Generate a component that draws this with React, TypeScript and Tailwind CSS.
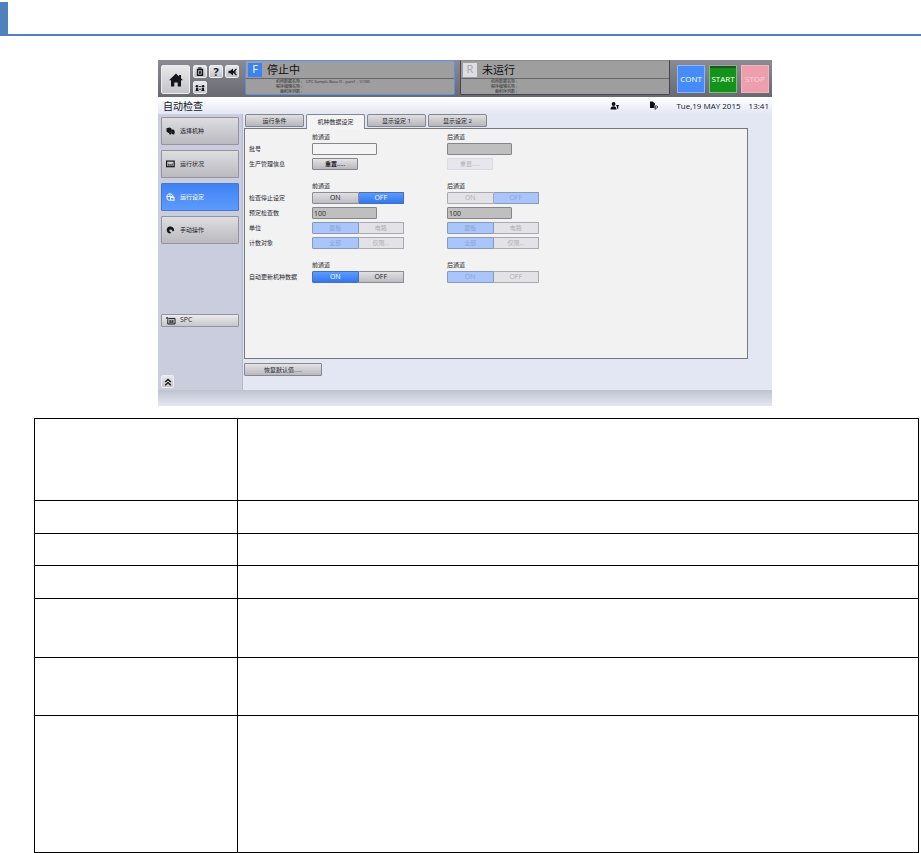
import { useState } from "react";
import type { ReactNode } from "react";
import clsx from "clsx";

const FONT = "font-['Open_Sans','Noto_Sans_CJK_SC',sans-serif]";

const HomeIcon = () => (
  <svg viewBox="0 0 14 14" className="w-[14px] h-[14px]" fill="#15151c">
    <path d="M7 0.5 10 3.4V2H12V5.3L14 7.2H12V13.5H8.7V9.5H5.3V13.5H2V7.2H0L7 0.5Z" />
  </svg>
);

const LockIcon = () => (
  <svg viewBox="0 0 8 9" className="w-[8px] h-[9px]" fill="none" stroke="#15151c">
    <path d="M1.5 8.3V2.5H6.5V8.3Z" strokeWidth="1.4" />
    <path d="M2 1H5.5" strokeWidth="1.2" />
    <path d="M3.4 7V4.2H4.8V7M3.4 5.8H4.8" strokeWidth="0.9" />
  </svg>
);

const MuteIcon = () => (
  <svg viewBox="0 0 9 8" className="w-[9px] h-[8px]">
    <path d="M0.5 2.7H2.2L5 0.5V7.5L2.2 5.3H0.5Z" fill="#15151c" />
    <path d="M5 4 8.5 1M5 4 8.5 7M5 4H8.2" stroke="#15151c" strokeWidth="1.1" />
  </svg>
);

const UsersIcon = () => (
  <svg viewBox="0 0 10 8" className="w-[10px] h-[8px]" fill="#15151c">
    <circle cx="2" cy="2.2" r="1.3" />
    <circle cx="8" cy="2.2" r="1.3" />
    <path d="M0.4 7V6.2H1V4H3.2V6.2H3.8V7ZM6.2 7V6.2H6.8V4H9V6.2H9.6V7Z" />
    <path d="M4.2 2H5.8V2.9H4.2ZM4.2 4.8H5.8V5.7H4.2Z" />
  </svg>
);

const PersonIcon = () => (
  <svg viewBox="0 0 10 8" className="w-[10px] h-[8px]" fill="#0c0c12">
    <circle cx="3.6" cy="2" r="1.9" />
    <path d="M0.5 7.5C0.5 5.2 1.8 4.3 3.6 4.3S6.3 5.2 6.5 7.5Z" />
    <path d="M6.2 3H8.8V4.2H8.2V6.8H7V4.2H6.2Z" />
  </svg>
);

const PageIcon = () => (
  <svg viewBox="0 0 9 9" className="w-[9px] h-[9px]" fill="#0c0c12">
    <path d="M1 0.5H3.6L6 2.6V4.2H5.4V7H1Z" />
    <path d="M6.2 8.8V4.9H7.4A1.1 1.1 0 0 1 7.4 7.2H6.2" fill="none" stroke="#0c0c12" strokeWidth="0.8" />
  </svg>
);

const SelectIcon = () => (
  <svg viewBox="0 0 9 8" className="w-[9px] h-[8px]" fill="#15151c">
    <path d="M0.5 1.2 3.8 0.4 5.4 1.5V5.4L2.4 6 0.5 4.6Z" />
    <path d="M5.2 2.5H7.6L8.6 4V6H8A1 1 0 0 1 6 6.6H3.6L5.2 5.6Z" />
    <circle cx="4.2" cy="6.6" r="1.1" />
    <circle cx="7.4" cy="6.4" r="1.1" />
  </svg>
);

const StatusIcon = () => (
  <svg viewBox="0 0 9 8" className="w-[9px] h-[8px]">
    <rect x="0.6" y="1.1" width="7.6" height="5.6" fill="none" stroke="#15151c" strokeWidth="1.2" />
    <path d="M2 5.2H6.8M2.4 5V3.6M4.2 5V4M6.2 5V3.4" stroke="#15151c" strokeWidth="0.7" />
  </svg>
);

const SettingsIcon = () => (
  <svg viewBox="0 0 9 8" className="w-[9px] h-[8px]" fill="none" stroke="#fff">
    <path d="M1 3.4C1 1.6 2.2 0.8 3.8 0.8S6.8 1.8 6.8 3.2M0.5 3.4H7.5M1.2 3.6V6.2C1.8 7.2 3 7.2 4 7.2" strokeWidth="1" />
    <rect x="4.6" y="4.4" width="3.4" height="2.8" strokeWidth="1" />
    <path d="M3 2H4.8" strokeWidth="0.8" />
  </svg>
);

const ManualIcon = () => (
  <svg viewBox="0 0 9 8" className="w-[9px] h-[8px]">
    <path d="M3.4 7.6C0 6.6 0 2.4 2.4 1C4.8 -0.2 8.2 1 8.2 4.4L6.8 5.4L5.4 3.4L3.4 3.8L3.6 5.6L5.4 6.8Z" fill="#15151c" />
  </svg>
);

const SpcIcon = () => (
  <svg viewBox="0 0 10 8" className="w-[10px] h-[8px]" fill="none" stroke="#15151c">
    <path d="M0.3 0.8H2L2.6 1.4H9V7H1.8V2.4Z" strokeWidth="1" />
    <path d="M3 3.2H7.8M3 4.6H7.8M3 5.8H7.8M4.4 3V6M6.4 3V6" strokeWidth="0.6" />
  </svg>
);

const CollapseIcon = () => (
  <svg viewBox="0 0 8 8" className="w-[8px] h-[8px]" fill="none" stroke="#15151c" strokeWidth="1.4">
    <path d="M1.2 4 4 1.4 6.8 4M1.2 7.2 4 4.6 6.8 7.2" />
  </svg>
);

const IconButton = ({ label, className, children }: { label: string; className: string; children: ReactNode }) => (
  <button
    type="button"
    aria-label={label}
    className={clsx(
      "flex items-center justify-center rounded-[2px] border border-[#ededf0] bg-linear-to-b from-[#e9e9eb] to-[#c4c4c9]",
      className
    )}
  >
    {children}
  </button>
);

type LaneProps = { letter: string; title: string; details: [string, string][]; active?: boolean };

const LaneStatus = ({ letter, title, details, active }: LaneProps) => (
  <section
    className={clsx(
      "flex-1 h-[35px] border bg-[#9e9e9e] rounded-b-[2px]",
      active ? "border-[#5c8fe6]" : "border-[#44444a] border-t-[#8a8a8e]"
    )}
  >
    <div className="flex items-center gap-[5px] h-[18px] pl-[2px] border-b border-[#66666b]">
      <span
        className={clsx(
          "flex items-center justify-center w-[14px] h-[14px] text-[11px]",
          active ? "bg-[#3b82f2] text-white" : "bg-[#dedee2] text-[#a5a5aa]"
        )}
      >
        {letter}
      </span>
      <h2 className="text-[11px] leading-[14px] text-[#101014]">{title}</h2>
    </div>
    <dl className="text-[4px] leading-[5px] text-[#2c2c30]">
      {details.map(([name, value]) => (
        <div key={name} className="flex gap-1 h-[5px]">
          <dt className="w-[56px] text-right">{name} :</dt>
          <dd>{value}</dd>
        </div>
      ))}
    </dl>
  </section>
);

const MENU = [
  { label: "选择机种", icon: <SelectIcon /> },
  { label: "运行状况", icon: <StatusIcon /> },
  { label: "运行设定", icon: <SettingsIcon /> },
  { label: "手动操作", icon: <ManualIcon /> },
];

const TABS = ["运行条件", "机种数据设定", "显示设定 1", "显示设定 2"];

type ToggleProps = { name: string; options: [string, string]; value: number; disabled?: boolean; small?: boolean };

const Toggle = ({ name, options, value, disabled, small }: ToggleProps) => {
  const [selected, setSelected] = useState(value);

  return (
    <div role="group" aria-label={name} className="flex w-[92px] h-3">
      {options.map((option, i) => (
        <button
          key={option}
          type="button"
          disabled={disabled}
          aria-pressed={selected === i}
          onClick={() => setSelected(i)}
          className={clsx(
            "flex-1 flex items-center justify-center border leading-[10px]",
            small ? "text-[6px]" : "text-[7px]",
            i === 0 ? "rounded-l-[1px]" : "rounded-r-[1px] border-l-0",
            disabled && selected === i && "border-[#8c98b4] bg-[#a8c5fc] text-[#8ea6d2]",
            disabled && selected !== i && "border-[#a9a9b0] bg-[#e2e2e7] text-[#b0b0b6]",
            !disabled && selected === i && "border-[#4a6eb0] bg-linear-to-b from-[#5b9bff] to-[#3377f0] text-white",
            !disabled && selected !== i && "border-[#8c8c92] bg-linear-to-b from-[#e0e0e4] to-[#bcbcc2] text-[#1c1c22]"
          )}
        >
          {option}
        </button>
      ))}
    </div>
  );
};

const Field = ({ name, value, disabled }: { name: string; value?: string; disabled?: boolean }) => (
  <input
    type="text"
    aria-label={name}
    defaultValue={value}
    disabled={disabled}
    className={clsx(
      "block w-[65px] h-3 px-px border border-[#85858a] rounded-[1px] text-[7px] leading-[10px] text-[#2c2c30]",
      disabled ? "bg-[#bfbfbf]" : "bg-[#f4f4f5]"
    )}
  />
);

const ResetButton = ({ disabled }: { disabled?: boolean }) => (
  <button
    type="button"
    disabled={disabled}
    className={clsx(
      "block w-[46px] h-3 border rounded-[1px] text-[6px] leading-[10px]",
      disabled
        ? "border-[#dadae0] bg-[#e6e6ec] text-[#b0b0b6]"
        : "border-[#85858a] bg-linear-to-b from-[#e4e4e7] to-[#b8b8bd] font-semibold text-[#1c1c22]"
    )}
  >
    重置.....
  </button>
);

const Row = ({ label, front, rear }: { label: string; front: ReactNode; rear: ReactNode }) => (
  <div className="grid grid-cols-[63px_135px_1fr] items-center h-3">
    <span>{label}</span>
    <div>{front}</div>
    <div>{rear}</div>
  </div>
);

const Group = ({ children }: { children: ReactNode }) => (
  <section>
    <div className="grid grid-cols-[63px_135px_1fr] h-3">
      <span className="col-start-2">前通道</span>
      <span>后通道</span>
    </div>
    <div className="flex flex-col gap-[3px]">{children}</div>
  </section>
);

const MachineScreen = () => {
  const [tab, setTab] = useState(1);
  const [menu, setMenu] = useState(2);

  return (
    <div className={clsx("bg-[#e3e7f4] text-[#26262c]", FONT)}>
      <header className="flex h-[37px] px-[3px] bg-linear-to-b from-[#8b8b93] to-[#696971]">
        <div className="flex gap-[3px] w-[84px] pt-[5px]">
          <IconButton label="主页" className="w-[29px] h-[29px]">
            <HomeIcon />
          </IconButton>
          <div className="grid grid-cols-3 content-start gap-x-[2px] gap-y-[3px]">
            <IconButton label="锁定" className="w-[14px] h-[13px]">
              <LockIcon />
            </IconButton>
            <IconButton label="帮助" className="w-[14px] h-[13px]">
              <span className="text-[11px] leading-[11px] font-bold text-[#15151c]">?</span>
            </IconButton>
            <IconButton label="静音" className="w-[14px] h-[13px]">
              <MuteIcon />
            </IconButton>
            <IconButton label="用户" className="w-[14px] h-[13px]">
              <UsersIcon />
            </IconButton>
          </div>
        </div>
        <div className="flex flex-1 gap-[5px]">
          <LaneStatus
            active
            letter="F"
            title="停止中"
            details={[
              ["机种数据名称", "CPC Sample Base D - part1 - 1/100"],
              ["程序编辑名称", ""],
              ["面积序列数", ""],
            ]}
          />
          <LaneStatus
            letter="R"
            title="未运行"
            details={[
              ["机种数据名称", ""],
              ["程序编辑名称", ""],
              ["面积序列数", ""],
            ]}
          />
        </div>
        <div className="flex gap-1 pl-[7px] pt-[5px] text-[8px] text-white">
          <button type="button" className="w-[28px] h-[28px] border border-[#8db6fa] bg-[#458bfa]">
            CONT
          </button>
          <button
            type="button"
            className="w-[28px] h-[28px] border border-[#7cc07e] bg-[#14931a] shadow-[inset_0_2px_0_#2d4a30]"
          >
            START
          </button>
          <button type="button" className="w-[28px] h-[28px] border border-[#f2b4c0] bg-[#ee9fae] text-[#f8d3da]">
            STOP
          </button>
        </div>
      </header>

      <div className="flex items-center h-[17px] pl-[5px] pr-[3px] bg-linear-to-b from-white to-[#e3e7f4] text-[#15151c]">
        <h1 className="flex-1 text-[10px] leading-[16px]">自动检查</h1>
        <div className="flex items-center gap-[29px] pr-[18px]">
          <PersonIcon />
          <PageIcon />
        </div>
        <time className="flex gap-2 text-[8px] leading-[16px]">
          <span>Tue,19 MAY 2015</span>
          <span>13:41</span>
        </time>
      </div>

      <div className="flex h-[276px]">
        <nav className="flex flex-col w-[85px] px-[3px] pt-[3px] pb-[2px] bg-[#c9cddd] border-r border-[#b4b8c8]">
          <div className="flex flex-col gap-[5px]">
            {MENU.map(({ label, icon }, i) => (
              <button
                key={label}
                type="button"
                onClick={() => setMenu(i)}
                className={clsx(
                  "flex items-center gap-[5px] h-[28px] pl-1 border rounded-[1px] text-[6px]",
                  menu === i
                    ? "border-[#4677cf] bg-linear-to-b from-[#3f82f4] to-[#5d9bfc] text-white"
                    : "border-[#94949c] bg-linear-to-b from-[#dedee1] to-[#b9b9bf]"
                )}
              >
                {icon}
                {label}
              </button>
            ))}
          </div>
          <button
            type="button"
            className="flex items-center gap-1 h-[13px] mt-[70px] pl-1 border border-[#94949c] rounded-[1px] bg-linear-to-b from-[#ececef] to-[#c6c6cb] text-[7px]"
          >
            <SpcIcon />
            SPC
          </button>
          <IconButton label="收起" className="w-[13px] h-[13px] mt-auto">
            <CollapseIcon />
          </IconButton>
        </nav>

        <main className="flex flex-col flex-1 pl-px pr-[24px]">
          <div role="tablist" className="flex gap-[2px] h-[14px] pl-px">
            {TABS.map((label, i) => (
              <button
                key={label}
                type="button"
                role="tab"
                aria-selected={tab === i}
                onClick={() => setTab(i)}
                className={clsx(
                  "w-[59px] border rounded-t-[2px] text-[6px] leading-[10px]",
                  tab === i
                    ? "h-[15px] border-[#85858a] border-b-0 bg-[#f4f4f6] z-10"
                    : "h-[13px] border-[#85858a] rounded-b-[1px] bg-linear-to-b from-[#e0e0e3] to-[#b6b6bc]"
                )}
              >
                {label}
              </button>
            ))}
          </div>

          <div
            role="tabpanel"
            className="flex flex-col gap-[10px] h-[231px] pt-[2px] pl-1 border border-[#77777d] bg-[#f2f2f3] text-[6px] leading-3"
          >
            <Group>
              <Row label="批号" front={<Field name="批号 前通道" />} rear={<Field name="批号 后通道" disabled />} />
              <Row label="生产管理信息" front={<ResetButton />} rear={<ResetButton disabled />} />
            </Group>
            <Group>
              <Row
                label="检查停止设定"
                front={<Toggle name="检查停止设定 前通道" options={["ON", "OFF"]} value={1} />}
                rear={<Toggle name="检查停止设定 后通道" options={["ON", "OFF"]} value={1} disabled />}
              />
              <Row
                label="预定检查数"
                front={<Field name="预定检查数 前通道" value="100" disabled />}
                rear={<Field name="预定检查数 后通道" value="100" disabled />}
              />
              <Row
                label="单位"
                front={<Toggle name="单位 前通道" options={["面板", "电路"]} value={0} disabled small />}
                rear={<Toggle name="单位 后通道" options={["面板", "电路"]} value={0} disabled small />}
              />
              <Row
                label="计数对象"
                front={<Toggle name="计数对象 前通道" options={["全部", "仅限..."]} value={0} disabled small />}
                rear={<Toggle name="计数对象 后通道" options={["全部", "仅限..."]} value={0} disabled small />}
              />
            </Group>
            <Group>
              <Row
                label="自动更新机种数据"
                front={<Toggle name="自动更新机种数据 前通道" options={["ON", "OFF"]} value={0} />}
                rear={<Toggle name="自动更新机种数据 后通道" options={["ON", "OFF"]} value={0} disabled />}
              />
            </Group>
          </div>

          <button
            type="button"
            className="w-[78px] h-[13px] mt-1 border border-[#85858a] rounded-[1px] bg-linear-to-b from-[#e4e4e7] to-[#b8b8bd] text-[6px] leading-[10px]"
          >
            恢复默认值.....
          </button>
        </main>
      </div>
      <footer className="h-4 bg-linear-to-b from-[#bfc3d0] to-[#e4e8f5]" />
    </div>
  );
};

const ROW_HEIGHTS = ["h-[82px]", "h-[33px]", "h-[32px]", "h-[33px]", "h-[59px]", "h-[58px]", "h-[137px]"];

export default function App() {
  return (
    <div className="bg-white">
      <div className="pt-[2px]">
        <div className="h-[34px] border-l-8 border-b-2 border-[#4f81bd]" />
      </div>
      <div className="pl-[9px] pt-6">
        <div className="max-w-[614px] mx-auto">
          <MachineScreen />
        </div>
      </div>
      <div className="pl-[34px] pr-[2px] pt-3">
        <table className="w-full table-fixed border-collapse">
          <colgroup>
            <col className="w-[23%]" />
            <col />
          </colgroup>
          <tbody>
            {ROW_HEIGHTS.map((height, i) => (
              <tr key={i} className={height}>
                <td className="border border-black" />
                <td className="border border-black" />
              </tr>
            ))}
          </tbody>
        </table>
      </div>
    </div>
  );
}
